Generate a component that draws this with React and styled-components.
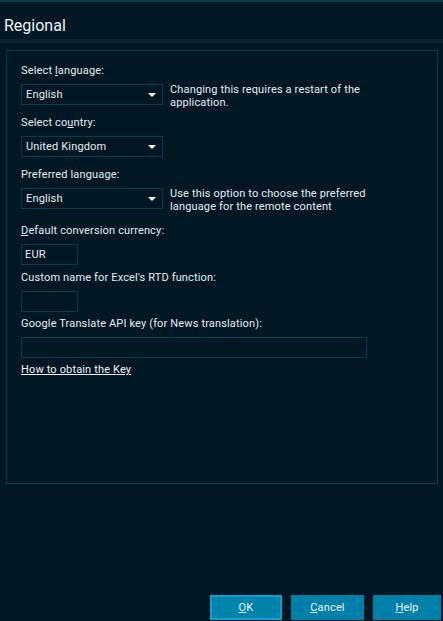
import React from "react";
import styled, { createGlobalStyle } from "styled-components";

const Global = createGlobalStyle`
  html, body { margin: 0; padding: 0; background: #011723; }
  body { font-family: Roboto, "Liberation Sans", sans-serif; color: #e6edf1; }
  #root { width: 443px; height: 621px; }
`;

const Window = styled.div`
  width: 443px;
  height: 621px;
  display: flex;
  flex-direction: column;
  background: #011723;
  border-top: 2px solid #0b3a52;
  box-sizing: border-box;
`;

const Header = styled.div`
  height: 37px;
  display: flex;
  align-items: center;
  padding: 9px 0 0 4px;
  box-sizing: border-box;
  font-size: 16px;
  color: #eef3f6;
`;

const Strip = styled.div`
  height: 4px;
  background: #0a212e;
`;

const Panel = styled.div`
  margin: 7px 0 0 6px;
  width: 432px;
  height: 434px;
  box-sizing: border-box;
  border: 1px solid #0b3a50;
  padding: 13px 14px 0 14px;
  display: flex;
  flex-direction: column;
  font-size: 11px;
  letter-spacing: 0.15px;
`;

const Field = styled.div`
  display: flex;
  flex-direction: column;
  gap: 6px;
  margin-top: ${(p) => p.$gap || 0}px;
`;

const Label = styled.div`
  line-height: 14px;
  height: 14px;
  white-space: nowrap;
`;

const Row = styled.div`
  display: flex;
  align-items: flex-start;
  gap: 7px;
  height: 21px;
`;

const Select = styled.div`
  width: 142px;
  height: 21px;
  flex: none;
  box-sizing: border-box;
  border: 1px solid #0b3a50;
  display: flex;
  align-items: center;
  justify-content: space-between;
  padding: 0 6px 0 4px;
`;

const Arrow = styled.span`
  width: 0;
  height: 0;
  border-left: 4px solid transparent;
  border-right: 4px solid transparent;
  border-top: 4px solid #ffffff;
  margin-top: 1px;
`;

const Desc = styled.div`
  line-height: 13px;
  margin-top: -1px;
  white-space: nowrap;
`;

const Input = styled.div`
  width: ${(p) => p.$w}px;
  height: 21px;
  box-sizing: border-box;
  border: 1px solid #0b3a50;
  display: flex;
  align-items: center;
  padding: 0 3px;
`;

const Link = styled.a`
  margin-top: 5px;
  line-height: 14px;
  color: #eef3f6;
  text-decoration: underline;
  text-underline-offset: 1px;
  align-self: flex-start;
  cursor: pointer;
`;

const Spacer = styled.div`
  flex: 1;
`;

const Footer = styled.div`
  display: flex;
  justify-content: flex-end;
  gap: 9px;
  padding: 0 2px 1px 0;
`;

const Button = styled.button`
  width: ${(p) => p.$w}px;
  height: 25px;
  box-sizing: border-box;
  border: ${(p) => (p.$primary ? "2px solid #0aa2d6" : "none")};
  background: ${(p) => (p.$primary ? "#0083ab" : "#0080a8")};
  color: #eef3f6;
  font-family: Roboto, "Liberation Sans", sans-serif;
  font-size: 11px;
  letter-spacing: 0.15px;
  padding: 0;
  display: flex;
  align-items: center;
  justify-content: center;
`;

const U = styled.span`
  text-decoration: underline;
`;

export default function App() {
  return (
    <>
      <Global />
      <Window>
        <Header>Regional</Header>
        <Strip />
        <Panel>
          <Field>
            <Label>
              Select <U>l</U>anguage:
            </Label>
            <Row>
              <Select>
                English
                <Arrow />
              </Select>
              <Desc>
                Changing this requires a restart of the
                <br />
                application.
              </Desc>
            </Row>
          </Field>
          <Field $gap={11}>
            <Label>
              Select co<U>u</U>ntry:
            </Label>
            <Row>
              <Select>
                United Kingdom
                <Arrow />
              </Select>
            </Row>
          </Field>
          <Field $gap={11}>
            <Label>Preferred language:</Label>
            <Row>
              <Select>
                English
                <Arrow />
              </Select>
              <Desc>
                Use this option to choose the preferred
                <br />
                language for the remote content
              </Desc>
            </Row>
          </Field>
          <Field $gap={15}>
            <Label>
              <U>D</U>efault conversion currency:
            </Label>
            <Input $w={57}>EUR</Input>
          </Field>
          <Field $gap={6}>
            <Label>Custom name for Excel's RTD function:</Label>
            <Input $w={57} />
          </Field>
          <Field $gap={5}>
            <Label>Google Translate API key (for News translation):</Label>
            <Input $w={346} />
          </Field>
          <Link>How to obtain the Key</Link>
        </Panel>
        <Spacer />
        <Footer>
          <Button $primary $w={72}>
            <U>O</U>K
          </Button>
          <Button $w={73}>
            <U>C</U>ancel
          </Button>
          <Button $w={68}>
            <U>H</U>elp
          </Button>
        </Footer>
      </Window>
    </>
  );
}
